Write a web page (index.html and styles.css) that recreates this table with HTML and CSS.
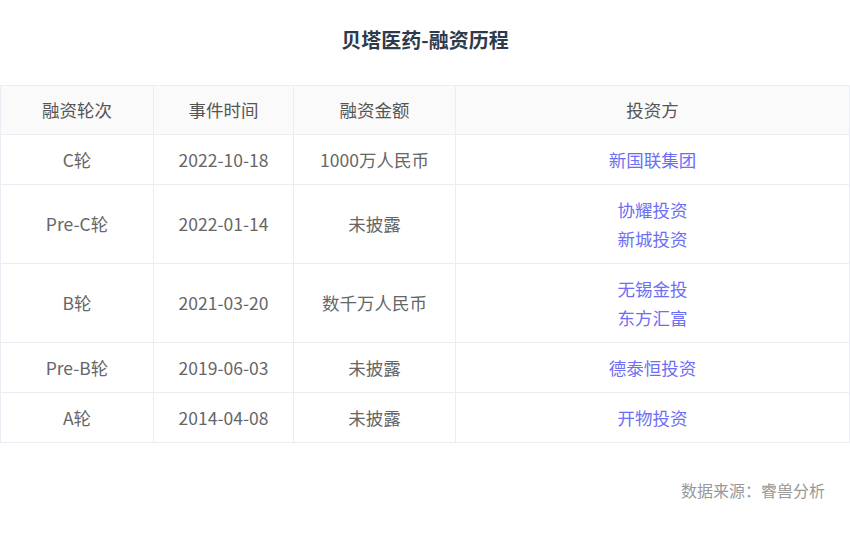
FILE: index.html
```html
<!DOCTYPE html>
<html lang="zh">
<head>
<meta charset="utf-8">
<link rel="stylesheet" href="styles.css">
</head>
<body>
<div class="page">
  <h1 class="title">贝塔医药-融资历程</h1>
  <table class="fin">
    <colgroup>
      <col class="c1"><col class="c2"><col class="c3"><col class="c4">
    </colgroup>
    <thead>
      <tr><th>融资轮次</th><th>事件时间</th><th>融资金额</th><th>投资方</th></tr>
    </thead>
    <tbody>
      <tr><td>C轮</td><td>2022-10-18</td><td>1000万人民币</td><td><a class="inv">新国联集团</a></td></tr>
      <tr><td>Pre-C轮</td><td>2022-01-14</td><td>未披露</td><td><a class="inv">协耀投资</a><a class="inv">新城投资</a></td></tr>
      <tr><td>B轮</td><td>2021-03-20</td><td>数千万人民币</td><td><a class="inv">无锡金投</a><a class="inv">东方汇富</a></td></tr>
      <tr><td>Pre-B轮</td><td>2019-06-03</td><td>未披露</td><td><a class="inv">德泰恒投资</a></td></tr>
      <tr><td>A轮</td><td>2014-04-08</td><td>未披露</td><td><a class="inv">开物投资</a></td></tr>
    </tbody>
  </table>
  <div class="source">数据来源：睿兽分析</div>
</div>
</body>
</html>
```
FILE: styles.css
```css
html, body {
  margin: 0;
  padding: 0;
  background: #fff;
}
.page {
  font-family: "Noto Sans CJK SC", "Noto Sans", sans-serif;
  color: #666;
}
.title {
  margin: 0;
  padding-top: 25px;
  height: 85px;
  box-sizing: border-box;
  font-size: 20px;
  line-height: 30px;
  font-weight: 700;
  color: #2d3a4b;
  text-align: center;
}
.fin {
  width: 850px;
  border-collapse: collapse;
  table-layout: fixed;
  font-size: 17.5px;
}
.c1 { width: 153px; }
.c2 { width: 140px; }
.c3 { width: 162px; }
.c4 { width: auto; }
.fin th, .fin td {
  border: 1px solid #ebedf4;
  padding: 10px 4px;
  line-height: 28px;
  text-align: center;
  font-weight: 400;
  color: #666;
  vertical-align: middle;
}
.fin th {
  background: #fafafa;
  color: #555;
}
.inv {
  display: block;
  color: #6e6ef5;
  line-height: 29px;
}
.source {
  text-align: right;
  padding-right: 25px;
  margin-top: 35px;
  font-size: 16px;
  line-height: 24px;
  color: #999;
}
```
